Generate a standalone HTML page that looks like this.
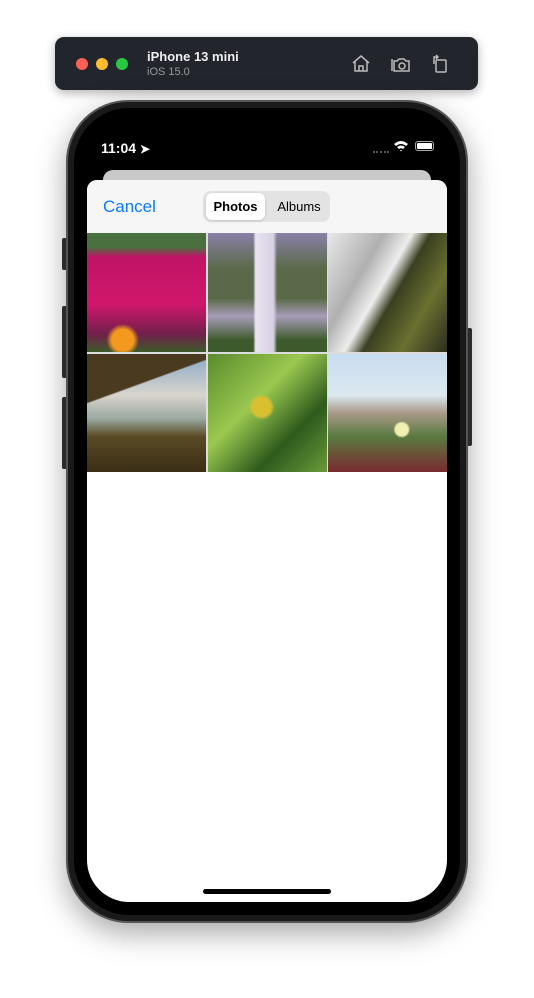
<!DOCTYPE html><html><head><style>
*{margin:0;padding:0;box-sizing:border-box}
body{width:534px;height:998px;background:#fff;position:relative;overflow:hidden;font-family:"Liberation Sans",sans-serif}
.a{position:absolute}
.c{position:absolute;width:119px;height:119px}
</style></head><body>
<div class="a" style="left:55px;top:37px;width:423px;height:53px;background:#22252c;border-radius:9px;box-shadow:0 3px 10px rgba(0,0,0,.3)"></div>
<div class="a" style="left:76px;top:58px;width:12px;height:12px;border-radius:50%;background:#fe5f57"></div>
<div class="a" style="left:96px;top:58px;width:12px;height:12px;border-radius:50%;background:#febc2e"></div>
<div class="a" style="left:116px;top:58px;width:12px;height:12px;border-radius:50%;background:#28c840"></div>
<div class="a" style="left:147px;top:49px;color:#eee;font-weight:bold;font-size:13px">iPhone 13 mini</div>
<div class="a" style="left:147px;top:66px;color:#999;font-size:11px">iOS 15.0</div>
<svg class="a" style="left:350px;top:52px" width="100" height="24" fill="none" stroke="#bbb" stroke-width="1.5"><path d="M3 11 L11 4 L19 11 M5 9 V19 H17 V9 M9 19 V14 H13 V19"/><path d="M44 9 h3 l2-2 h5 l2 2 h3 v10 h-15z M42 7 v12"/><circle cx="52" cy="14" r="3"/><rect x="86" y="8" width="10" height="12" rx="1"/><path d="M84 12 V5 h4 M86 3 l2 2 -2 2"/></svg>
<div class="a" style="left:62px;top:238px;width:5px;height:32px;background:#333;border-radius:2px"></div>
<div class="a" style="left:62px;top:306px;width:5px;height:72px;background:#333;border-radius:2px"></div>
<div class="a" style="left:62px;top:397px;width:5px;height:72px;background:#333;border-radius:2px"></div>
<div class="a" style="left:467px;top:328px;width:5px;height:118px;background:#333;border-radius:2px"></div>
<div class="a" style="left:66px;top:100px;width:402px;height:823px;border-radius:62px;background:#1a1a1a;box-shadow:0 10px 30px rgba(0,0,0,.35);border:2px solid #555"></div>
<div class="a" style="left:74px;top:108px;width:386px;height:807px;border-radius:55px;background:#000"></div>
<div class="a" style="left:87px;top:120px;width:360px;height:782px;border-radius:42px;background:#000;overflow:hidden">
 <div class="a" style="left:14px;top:20px;color:#fff;font-size:14px;font-weight:bold">11:04 <span style="font-size:12px">➤</span></div>
 <div class="a" style="left:286px;top:31px;width:16px;height:2px;border-top:2px dotted #555"></div>
 <svg class="a" style="left:306px;top:20px" width="16" height="12"><path d="M1 4 Q8 -2 15 4 L13 6 Q8 2 3 6z M4 7 Q8 4 12 7 L10 9 Q8 7.5 6 9z M7 10 L8 11.5 L9 10z" fill="#fff"/></svg>
 <div class="a" style="left:328px;top:21px;width:19px;height:10px;border:1px solid #aaa;border-radius:3px;padding:1px"><div style="width:100%;height:100%;background:#fff;border-radius:1px"></div></div>
 <div class="a" style="left:16px;top:50px;width:328px;height:20px;background:#c9c9c9;border-radius:10px 10px 0 0"></div>
 <div class="a" style="left:0;top:60px;width:360px;height:722px;background:#fff;border-radius:10px 10px 0 0;overflow:hidden">
  <div style="height:53px;background:#f6f6f6"></div>
  <div class="a" style="left:16px;top:17px;color:#0a7aff;font-size:17px">Cancel</div>
  <div class="a" style="left:116px;top:11px;width:127px;height:31px;background:#e3e3e3;border-radius:8px"></div>
  <div class="a" style="left:119px;top:13px;width:59px;height:27px;background:#fff;border-radius:6px;box-shadow:0 1px 3px rgba(0,0,0,.15);text-align:center;line-height:27px;font-size:13px;font-weight:bold">Photos</div>
  <div class="a" style="left:184px;top:13px;width:56px;height:27px;text-align:center;line-height:27px;font-size:13px">Albums</div>
  <div class="a" style="left:0;top:53px;width:360px;height:239px;background:#ddd"></div>
  <div class="c" style="left:0;top:53px;background:radial-gradient(circle at 30% 90%,#f39a1e 0 8%,transparent 12%),linear-gradient(#4a7040 0 12%,#c01466 20%,#d0166c 60%,#70204a 85%,#3d5a2a)"></div>
  <div class="c" style="left:121px;top:53px;background:linear-gradient(90deg,transparent 38%,#e8e4ef 40%,#d8d0e4 55%,transparent 58%),linear-gradient(#8a80a8,#5a6a48 30%,#5a6a48 55%,#a89cb8 70%,#3d5a2c 90%)"></div>
  <div class="c" style="left:241px;top:53px;background:linear-gradient(120deg,#e8e8e8 0,#b0b0b0 30%,#eee 45%,#3a3f20 55%,#6a7030 75%,#2e2e1e)"></div>
  <div class="c" style="left:0;top:174px;width:119px;height:118px;background:linear-gradient(160deg,#4a3a20 0 30%,transparent 31%),linear-gradient(#8aa8c8,#d8d4cc 35%,#9aa8a0 55%,#5a4a24 70%,#3a2e16)"></div>
  <div class="c" style="left:121px;top:174px;height:118px;background:radial-gradient(ellipse at 45% 45%,#d8c030 0 10%,transparent 14%),linear-gradient(135deg,#5a8a2c,#9ac850 40%,#2e5a1c 70%,#6a9a3a)"></div>
  <div class="c" style="left:241px;top:174px;height:118px;background:radial-gradient(circle at 62% 64%,#f0f0b0 0 6%,transparent 8%),linear-gradient(#c8dcf0,#dce8f0 35%,#a89a88 50%,#5a7a40 70%,#7a2a30)"></div>
 </div>
 <div class="a" style="left:116px;top:769px;width:128px;height:5px;background:#000;border-radius:3px"></div>
</div>
</body></html>
